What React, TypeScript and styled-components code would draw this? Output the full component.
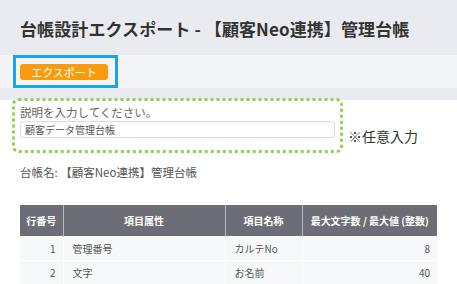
import React from "react";
import styled, { createGlobalStyle } from "styled-components";

const Global = createGlobalStyle`
  html, body { margin: 0; padding: 0; background: #ffffff; }
  body { font-family: "Noto Sans CJK JP", "Noto Sans", sans-serif; color: #333; }
`;

const Page = styled.div`
  width: 457px;
  height: 284px;
  overflow: hidden;
  background: #fff;
`;

const Header = styled.header`
  height: 55px;
  background: #e9ebf0;
  display: flex;
  align-items: center;
  padding-left: 20px;
  box-sizing: border-box;
`;

const Title = styled.h1`
  margin: 0;
  font-size: 17px;
  font-weight: 700;
  color: #333;
  letter-spacing: 0.1px;
  line-height: 1;
  padding-top: 1px;
`;

const Toolbar = styled.div`
  position: relative;
  height: 33px;
  background: #f3f4f7;
  display: flex;
  align-items: center;
  padding-left: 20px;
`;

const Highlight = styled.div`
  position: absolute;
  left: 13px;
  top: 0;
  width: 105px;
  height: 33px;
  box-sizing: border-box;
  border: 3px solid #1aa6e6;
  pointer-events: none;
`;

const ExportButton = styled.button`
  width: 88px;
  height: 16px;
  margin-top: 1px;
  padding: 0;
  border: none;
  border-radius: 3px;
  background: #f89c0e;
  color: #fff;
  font-family: inherit;
  font-size: 11px;
  line-height: 16px;
`;

const Strip = styled.div`
  height: 12px;
  background: #e9ebf0;
`;

const Content = styled.main`
  padding: 0 20px;
`;

const DescBlock = styled.section`
  position: relative;
  padding-top: 5px;
`;

const DottedFrame = styled.svg`
  position: absolute;
  left: -8px;
  top: -2px;
  width: 331px;
  height: 55px;
  overflow: visible;
  pointer-events: none;
`;

const Label = styled.div`
  font-size: 11.5px;
  line-height: 14px;
  color: #666;
`;

const InputRow = styled.div`
  display: flex;
  align-items: flex-end;
  gap: 13px;
  margin-top: 2px;
`;

const TextInput = styled.div`
  width: 315px;
  height: 17px;
  box-sizing: border-box;
  border: 1px solid #dcdcdc;
  border-radius: 3px;
  background: #fff;
  font-size: 10px;
  line-height: 15px;
  color: #555;
  padding-left: 4px;
`;

const Note = styled.span`
  font-size: 14px;
  line-height: 14px;
  color: #333;
  margin-bottom: -5px;
  white-space: nowrap;
`;

const LedgerName = styled.div`
  margin-top: 27px;
  font-size: 11.5px;
  line-height: 14px;
  color: #555;
`;

const Table = styled.table`
  margin-top: 26px;
  width: 417px;
  border-collapse: collapse;
  font-size: 10px;
  table-layout: fixed;
`;

const Th = styled.th`
  background: #6d6d75;
  color: #fff;
  font-weight: 700;
  height: 31px;
  padding: 0;
  text-align: center;
  border-left: 1px solid #b9b9c1;
  &:first-child { border-left: none; }
`;

const Td = styled.td<{ $align?: "left" | "right" }>`
  background: #f7f8fa;
  color: #555;
  height: 23px;
  padding: ${(p) => (p.$align === "right" ? "0 7px" : "0 7px 0 9px")};
  text-align: ${(p) => p.$align ?? "left"};
  border-top: 1px solid #fff;
  border-left: 1px solid #fff;
  &:first-child { border-left: none; }
`;

const rows = [
  { no: 1, attr: "管理番号", name: "カルテNo", max: "8" },
  { no: 2, attr: "文字", name: "お名前", max: "40" },
];

export default function App() {
  return (
    <Page>
      <Global />
      <Header>
        <Title>台帳設計エクスポート - 【顧客Neo連携】管理台帳</Title>
      </Header>
      <Toolbar>
        <ExportButton>エクスポート</ExportButton>
        <Highlight />
      </Toolbar>
      <Strip />
      <Content>
        <DescBlock>
          <Label>説明を入力してください。</Label>
          <InputRow>
            <TextInput>顧客データ管理台帳</TextInput>
            <Note>※任意入力</Note>
          </InputRow>
          <DottedFrame viewBox="0 0 331 55">
            <rect
              x="1.5"
              y="1.5"
              width="328"
              height="52"
              rx="5"
              fill="none"
              stroke="#92d050"
              strokeWidth="3"
              strokeDasharray="3 3"
            />
          </DottedFrame>
        </DescBlock>
        <LedgerName>台帳名: 【顧客Neo連携】管理台帳</LedgerName>
        <Table>
          <colgroup>
            <col style={{ width: 43 }} />
            <col style={{ width: 162 }} />
            <col style={{ width: 77 }} />
            <col style={{ width: 135 }} />
          </colgroup>
          <thead>
            <tr>
              <Th>行番号</Th>
              <Th>項目属性</Th>
              <Th>項目名称</Th>
              <Th>最大文字数 / 最大値 (整数)</Th>
            </tr>
          </thead>
          <tbody>
            {rows.map((r) => (
              <tr key={r.no}>
                <Td $align="right">{r.no}</Td>
                <Td>{r.attr}</Td>
                <Td>{r.name}</Td>
                <Td $align="right">{r.max}</Td>
              </tr>
            ))}
          </tbody>
        </Table>
      </Content>
    </Page>
  );
}
